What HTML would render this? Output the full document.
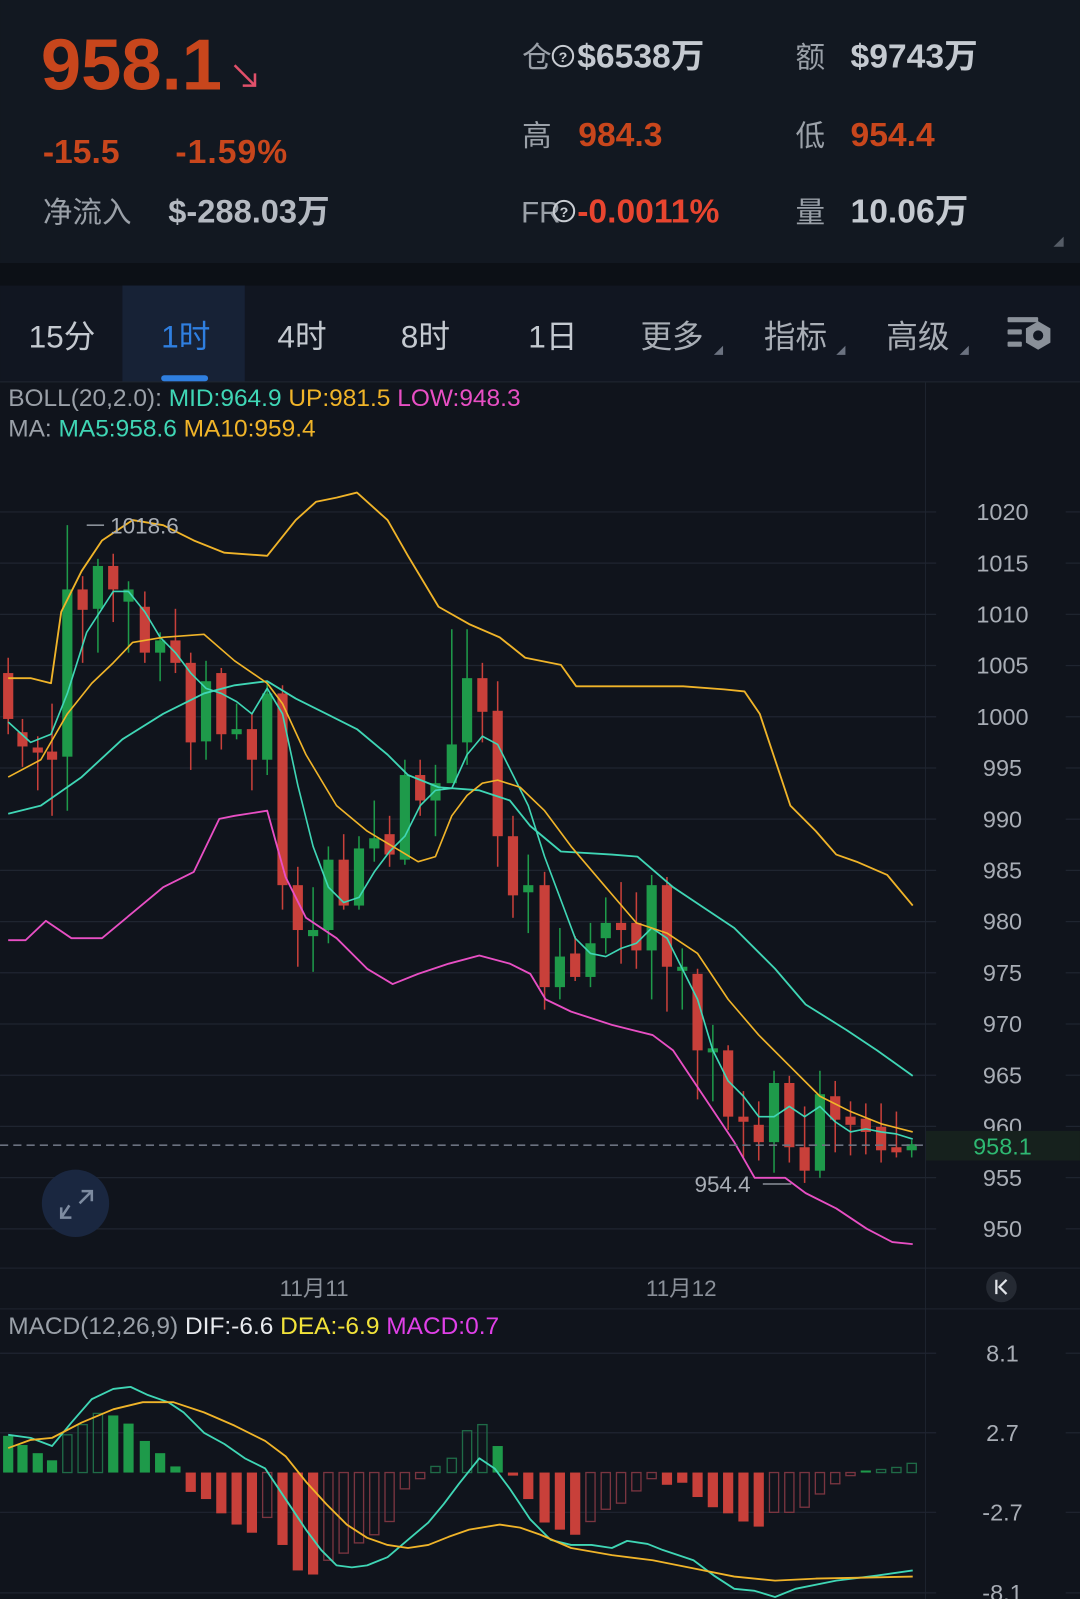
<!DOCTYPE html>
<html><head><meta charset="utf-8"><style>
html,body{margin:0;padding:0;background:#10141c;}
svg{display:block}
text{font-family:"Liberation Sans","Noto Sans CJK SC",sans-serif;}
</style></head><body>
<svg id="s" width="1080" height="1599" viewBox="0 0 1059 1568" xmlns="http://www.w3.org/2000/svg">
<rect width="1059" height="1568" fill="#10141c"/>
<rect width="1059" height="258" fill="#121821"/>
<rect y="258" width="1059" height="22" fill="#0c1016"/>
<rect y="280" width="1059" height="94" fill="#111621"/>
<rect x="120" y="280" width="120" height="94" fill="#172236"/>
<rect x="158" y="368" width="46" height="6" rx="3" fill="#2f7fe0"/>
<line x1="0" y1="374.5" x2="1059" y2="374.5" stroke="#222833"/>

<!-- header -->
<text x="40" y="88" font-size="71" font-weight="bold" fill="#c8461c">958.1</text>
<path d="M230 64 L250 84 M238 84 L250 84 L250 72" stroke="#e0506a" stroke-width="2.5" fill="none"/>
<text x="42" y="160" font-size="33" font-weight="bold" fill="#c8461c">-15.5</text>
<text x="172" y="160" font-size="33" font-weight="bold" fill="#c8461c" letter-spacing="1">-1.59%</text>
<text x="42" y="218" font-size="29" fill="#9aa0a8">净流入</text>
<text x="165" y="218" font-size="32" font-weight="bold" fill="#b4b9c1">$-288.03万</text>

<text x="512" y="66" font-size="29" fill="#9aa0a8">仓</text>
<circle cx="552" cy="55" r="10" fill="none" stroke="#c8ccd2" stroke-width="2"/><text x="552" y="61" font-size="14" fill="#c8ccd2" text-anchor="middle" font-weight="bold">?</text>
<text x="566" y="66" font-size="33" font-weight="bold" fill="#c4c9d0">$6538万</text>
<text x="780" y="66" font-size="29" fill="#9aa0a8">额</text>
<text x="834" y="66" font-size="33" font-weight="bold" fill="#c4c9d0">$9743万</text>
<text x="512" y="143" font-size="29" fill="#9aa0a8">高</text>
<text x="567" y="143" font-size="33" font-weight="bold" fill="#c8461c">984.3</text>
<text x="780" y="143" font-size="29" fill="#9aa0a8">低</text>
<text x="834" y="143" font-size="33" font-weight="bold" fill="#c8461c">954.4</text>
<text x="511" y="218" font-size="29" fill="#9aa0a8">FR</text>
<circle cx="553" cy="207" r="10" fill="none" stroke="#c8ccd2" stroke-width="2"/><text x="553" y="213" font-size="14" fill="#c8ccd2" text-anchor="middle" font-weight="bold">?</text>
<text x="566" y="218" font-size="33" font-weight="bold" fill="#e8452f">-0.0011%</text>
<text x="780" y="218" font-size="29" fill="#9aa0a8">量</text>
<text x="834" y="218" font-size="33" font-weight="bold" fill="#c4c9d0">10.06万</text>
<path d="M1043 232 L1043 242 L1033 242 Z" fill="#555c66"/>

<!-- tabs -->
<g font-size="31" fill="#c4c9d0">
<text x="28" y="341">15分</text>
<text x="158" y="341" fill="#2f7fe0">1时</text>
<text x="272" y="341">4时</text>
<text x="393" y="341">8时</text>
<text x="518" y="341">1日</text>
<text x="628" y="341" fill="#a8adb5">更多</text>
<text x="749" y="341" fill="#a8adb5">指标</text>
<text x="869" y="341" fill="#a8adb5">高级</text>
</g>
<path d="M709 339 L709 348 L700 348 Z M829 339 L829 348 L820 348 Z M950 339 L950 348 L941 348 Z" fill="#6b7280"/>
<g fill="#8a9099">
<rect x="988" y="311" width="30" height="5" rx="1"/>
<rect x="988" y="323" width="14" height="5" rx="1"/>
<rect x="988" y="335" width="14" height="5" rx="1"/>
<path d="M1018 315 L1030 322 L1030 336 L1018 343 L1006 336 L1006 322 Z"/>
</g>
<circle cx="1018" cy="329" r="5" fill="#111621"/>

<!-- legend -->
<g font-size="24">
<text x="8" y="398" fill="#9aa0a8">BOLL(20,2.0): <tspan fill="#3fd6b5">MID:964.9</tspan> <tspan fill="#f0b429">UP:981.5</tspan> <tspan fill="#e84fc4">LOW:948.3</tspan></text>
<text x="8" y="428" fill="#9aa0a8">MA: <tspan fill="#3fd6b5">MA5:958.6</tspan> <tspan fill="#f0b429">MA10:959.4</tspan></text>
<text x="8" y="1308" fill="#9aa0a8">MACD(12,26,9) <tspan fill="#e8eaee">DIF:-6.6</tspan> <tspan fill="#f2e33a">DEA:-6.9</tspan> <tspan fill="#e040e8">MACD:0.7</tspan></text>
</g>

<line x1="907.5" y1="375" x2="907.5" y2="1568" stroke="#1e242e"/>
<g id="grid" stroke="#1f2530" stroke-width="1.2"></g>
<g id="ylab" font-size="23" fill="#a8adb5" text-anchor="middle"></g>

<line x1="0" y1="1243.5" x2="1059" y2="1243.5" stroke="#1f2530"/>
<line x1="0" y1="1283.5" x2="1059" y2="1283.5" stroke="#1f2530"/>
<text x="308" y="1271" font-size="22" fill="#8a9099" text-anchor="middle">11月11</text>
<text x="668" y="1271" font-size="22" fill="#8a9099" text-anchor="middle">11月12</text>
<circle cx="982" cy="1262" r="15" fill="#252a33"/>
<path d="M977 1255 L977 1269 M987 1255 L980 1262 L987 1269" stroke="#e0e3e8" stroke-width="2.2" fill="none"/>

<g id="cand"></g>
<g id="lines" fill="none" stroke-width="1.8" stroke-linejoin="round"></g>
<g id="macd"></g>

<line x1="0" y1="1123" x2="907" y2="1123" stroke="#6b7280" stroke-width="1.5" stroke-dasharray="8 5"/>
<rect x="908" y="1109" width="151" height="29" fill="#16211d"/>
<text x="983" y="1132" font-size="23" fill="#2eb872" text-anchor="middle">958.1</text>

<line x1="85" y1="515" x2="102" y2="515" stroke="#8a9099" stroke-width="1.5"/>
<text x="108" y="523" font-size="22" fill="#a8adb5">1018.6</text>
<text x="681" y="1169" font-size="22" fill="#a8adb5">954.4</text>
<line x1="748" y1="1161" x2="776" y2="1161" stroke="#8a9099" stroke-width="1.5"/>

<circle cx="74" cy="1180" r="33" fill="#1a2740"/>
<path d="M80 1168 L90 1168 L90 1178 M90 1168 L78 1180 M68 1182 L60 1194 M60 1184 L60 1194 L70 1194" stroke="#7d8ba0" stroke-width="2.5" fill="none"/>
</svg>
<script>
var NS="http://www.w3.org/2000/svg";
function el(p,t,a){var e=document.createElementNS(NS,t);for(var k in a)e.setAttribute(k,a[k]);document.getElementById(p).appendChild(e);return e;}
var labs=[1020,1015,1010,1005,1000,995,990,985,980,975,970,965,960,955,950];
labs.forEach(function(p){var y=502+(1020-p)*10.043;el('grid','line',{x1:0,x2:918,y1:y,y2:y});el('grid','line',{x1:1045,x2:1059,y1:y,y2:y});
var t=el('ylab','text',{x:983,y:y+8});t.textContent=p;});
[[1327,'8.1'],[1405,'2.7'],[1483,'-2.7'],[1562,'-8.1']].forEach(function(a){el('grid','line',{x1:0,x2:918,y1:a[0],y2:a[0]});el('grid','line',{x1:1045,x2:1059,y1:a[0],y2:a[0]});var t=el('ylab','text',{x:983,y:a[0]+8});t.textContent=a[1];});
var C=[[8,660,705,0,645,720],[22,718,732,0,705,752],[37,733,738,0,722,775],[51,737,745,0,690,800],[66,578,742,1,515,795],[81,578,598,0,565,650],[96,555,597,1,548,640],[111,555,578,0,543,610],[126,578,590,1,570,640],[142,595,640,0,580,650],[157,628,640,1,620,668],[172,628,650,0,597,660],[187,650,728,0,640,755],[202,668,727,1,648,745],[217,660,720,0,655,735],[232,715,720,1,690,725],[247,715,745,0,700,775],[262,680,745,1,670,760],[277,680,868,0,672,892],[292,868,912,0,850,948],[307,912,918,1,870,953],[322,843,912,1,830,925],[337,843,888,0,818,892],[352,832,888,1,820,892],[367,822,832,1,785,845],[382,818,838,0,800,850],[397,760,843,1,745,848],[412,760,785,0,745,800],[427,768,785,1,750,820],[443,730,768,1,617,760],[458,665,728,1,617,750],[473,665,698,0,650,728],[488,697,820,0,668,850],[503,820,878,0,800,900],[518,868,875,1,838,915],[534,868,968,0,855,990],[549,938,968,1,910,980],[564,935,958,0,918,962],[579,925,958,1,905,968],[594,905,920,1,880,935],[609,905,912,0,865,945],[624,905,932,0,875,950],[639,868,932,1,858,980],[654,868,948,0,860,992],[669,948,952,1,930,990],[684,955,1030,0,950,1078],[699,1028,1032,1,1005,1080],[714,1030,1095,0,1025,1108],[729,1095,1100,0,1070,1135],[744,1103,1120,0,1080,1138],[759,1062,1120,1,1050,1150],[774,1062,1125,0,1055,1140],[789,1125,1148,0,1085,1160],[804,1073,1148,1,1050,1155],[819,1075,1098,0,1060,1130],[834,1095,1103,0,1080,1133],[849,1097,1110,0,1082,1132],[864,1105,1128,0,1082,1140],[879,1125,1130,0,1090,1135],[894,1122,1128,1,1118,1135]];
C.forEach(function(c){var col=c[3]?'#1e9a4a':'#c8403a';el('cand','line',{x1:c[0],x2:c[0],y1:c[4],y2:c[5],stroke:col,'stroke-width':1.5});el('cand','rect',{x:c[0]-5,y:c[1],width:10,height:Math.max(3,c[2]-c[1]),fill:col});});
function pl(pts,col,w,g){el(g||'lines','polyline',{points:pts,stroke:col,'stroke-width':w||1.8,fill:'none','stroke-linejoin':'round'});}
pl("8,665 30,665 50,670 60,600 80,560 100,530 130,510 160,515 190,530 220,542 262,545 290,510 310,492 330,488 350,483 380,510 400,545 430,595 460,612 490,625 515,645 550,652 565,673 600,673 670,673 710,676 730,678 745,700 760,745 775,790 800,815 820,838 840,845 870,858 895,888","#f0b429");
pl("8,798 40,790 80,762 120,725 160,700 200,680 230,672 262,668 290,685 320,700 350,715 380,740 400,760 430,772 470,775 500,785 520,810 550,835 600,838 625,840 660,870 690,890 720,910 760,950 790,985 830,1010 860,1030 895,1055","#3fd6b5");
pl("8,922 25,922 45,903 70,920 100,920 130,895 160,870 190,855 215,803 230,800 262,795 280,860 300,900 330,920 360,950 385,965 410,955 440,945 470,937 500,945 520,955 535,980 560,992 600,1005 640,1015 660,1030 680,1060 700,1090 720,1120 740,1155 770,1155 790,1170 820,1185 850,1205 875,1218 895,1220","#e84fc4");
pl("8,708 30,728 50,720 66,680 85,620 111,580 126,580 142,600 157,625 172,640 187,660 202,675 217,680 232,688 247,700 262,675 277,700 292,770 307,830 322,870 337,885 352,880 367,855 382,835 397,820 412,790 427,775 443,773 458,740 473,722 488,730 503,760 518,790 534,840 549,880 564,920 579,935 594,938 609,930 624,925 639,910 654,920 669,950 684,980 699,1030 714,1060 729,1075 744,1095 759,1095 774,1085 789,1095 804,1085 819,1100 834,1110 849,1107 864,1110 879,1112 895,1117","#3fd6b5",1.6);
pl("8,762 40,745 66,700 90,670 111,650 130,630 160,625 200,622 230,648 262,670 277,690 300,740 330,790 360,815 390,833 410,845 427,840 443,800 458,780 473,768 488,765 510,772 534,795 560,830 594,870 624,905 654,915 684,935 714,980 744,1015 774,1045 804,1075 834,1090 864,1102 895,1110","#f0b429",1.6);
var Z=1444;
var H=[[8,1408,1],[22,1417,1],[37,1425,1],[51,1432,1],[66,1407,0],[81,1397,0],[96,1386,0],[111,1388,1],[126,1396,1],[142,1413,1],[157,1425,1],[172,1438,1],[187,1463,1],[202,1470,1],[217,1484,1],[232,1495,1],[247,1503,1],[262,1488,0],[277,1515,1],[292,1540,1],[307,1544,1],[322,1530,0],[337,1523,0],[352,1513,0],[367,1505,0],[382,1492,0],[397,1460,0],[412,1450,0],[427,1438,0],[443,1430,0],[458,1403,0],[473,1397,0],[488,1418,1],[503,1447,1],[518,1470,1],[534,1493,1],[549,1500,1],[564,1505,1],[579,1492,0],[594,1480,0],[609,1474,0],[624,1462,0],[639,1450,0],[654,1456,1],[669,1454,1],[684,1468,1],[699,1478,1],[714,1484,1],[729,1492,1],[744,1497,1],[759,1483,0],[774,1483,0],[789,1478,0],[804,1465,0],[819,1455,0],[834,1447,0],[849,1442,1],[864,1441,0],[879,1439,0],[894,1435,0]];
H.forEach(function(h){var up=h[1]<Z;var col=up?(h[2]?'#1e9a4a':'#1f6b47'):(h[2]?'#c8403a':'#7a3540');var y=Math.min(h[1],Z),hh=Math.max(1.5,Math.abs(h[1]-Z));
if(h[2])el('macd','rect',{x:h[0]-5,y:y,width:10,height:hh,fill:col});else el('macd','rect',{x:h[0]-4.5,y:y,width:9,height:hh,fill:'none',stroke:col,'stroke-width':1.3});});
pl("8,1407 30,1410 51,1418 70,1395 90,1372 111,1362 128,1360 145,1368 165,1375 180,1385 200,1405 220,1416 240,1430 260,1440 280,1470 300,1500 315,1520 330,1535 345,1537 360,1535 380,1527 400,1510 420,1493 435,1475 450,1455 470,1430 485,1440 500,1460 520,1490 540,1510 560,1515 580,1515 600,1518 615,1511 635,1514 650,1520 680,1530 700,1545 720,1558 740,1560 760,1566 780,1558 820,1550 860,1545 895,1540","#3fd6b5",1.8,'macd');
pl("8,1420 30,1412 51,1410 80,1395 111,1382 140,1375 170,1375 200,1385 230,1398 260,1413 280,1428 300,1453 320,1475 340,1495 360,1508 380,1515 400,1518 420,1515 440,1507 460,1500 490,1495 510,1498 530,1505 560,1518 600,1525 640,1530 680,1538 720,1546 760,1550 800,1548 850,1547 895,1546","#f0b429",1.8,'macd');
</script>
</body></html>
